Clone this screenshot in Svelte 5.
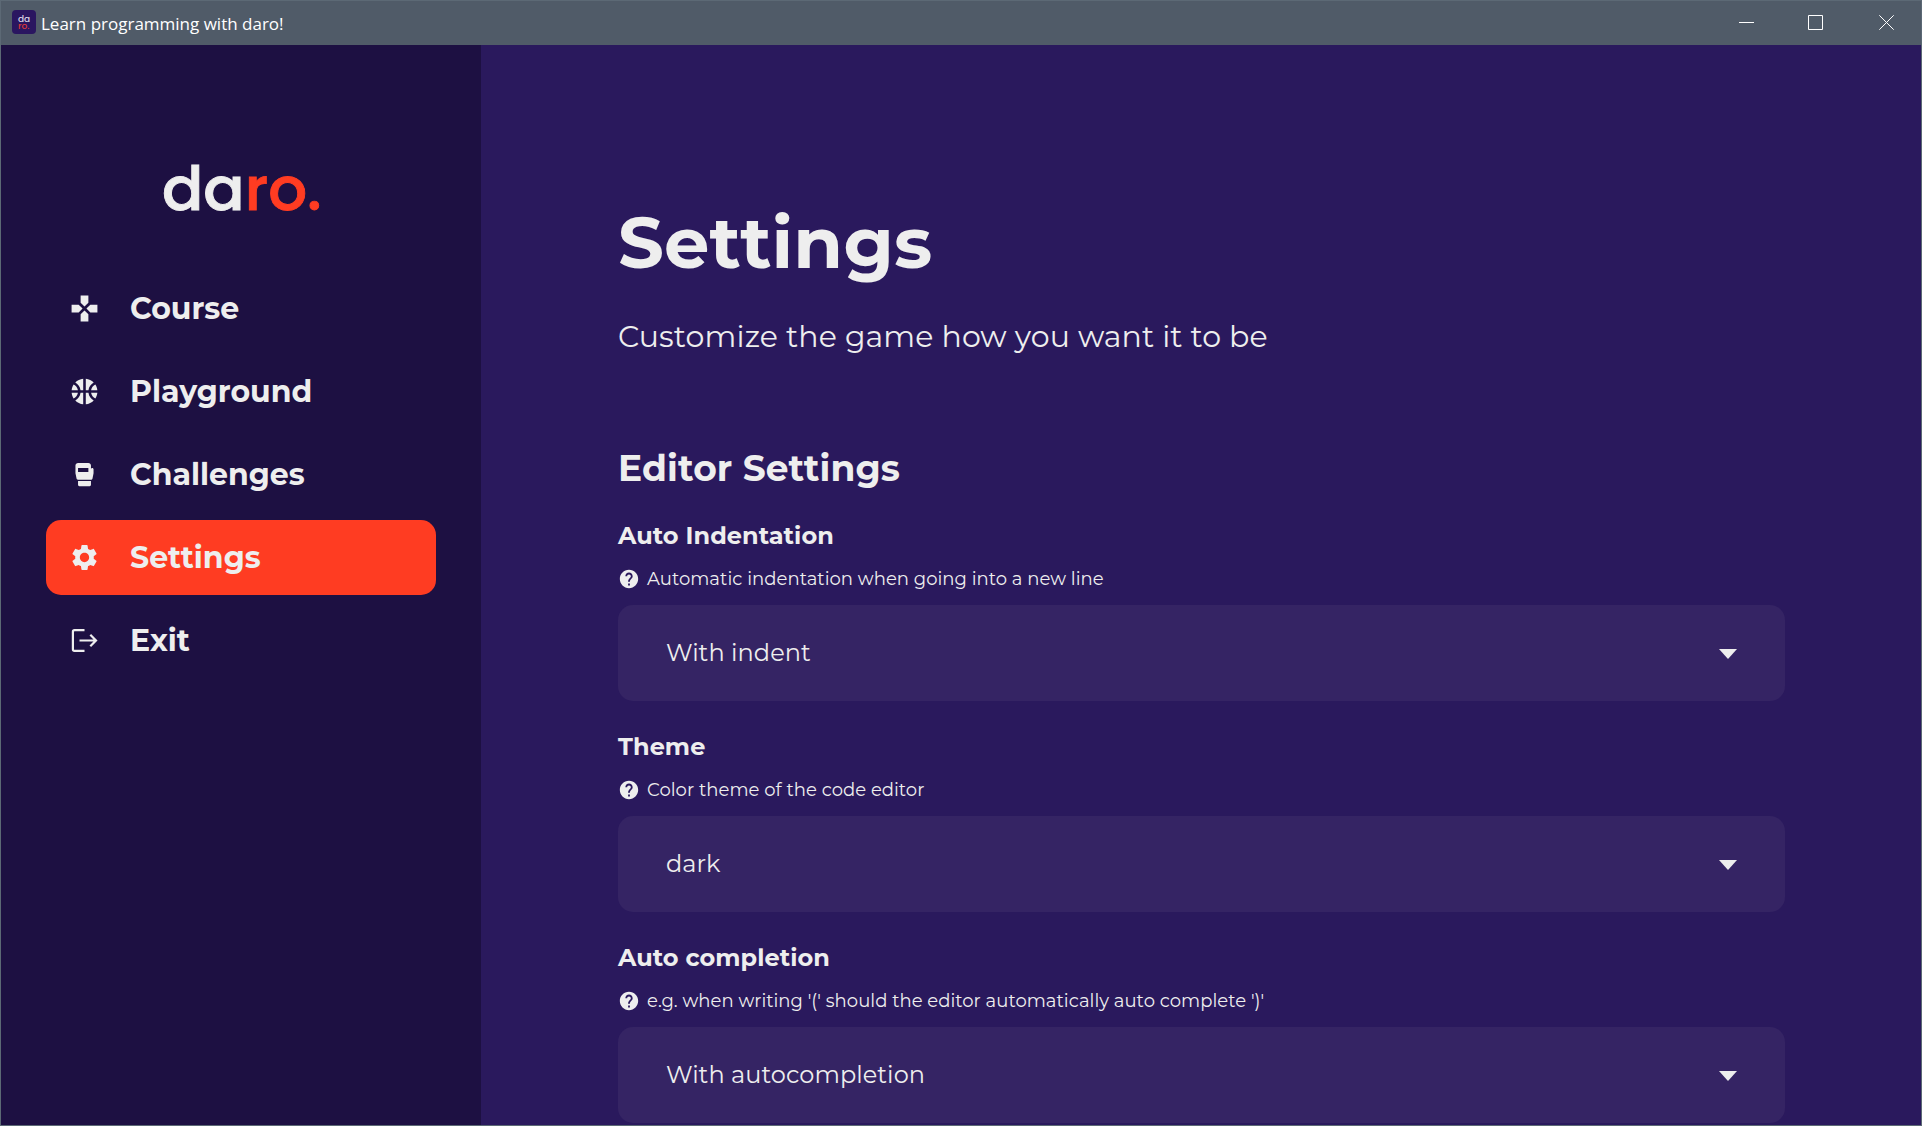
<script>
  const menu = [
    {
      label: 'Course',
      icon: 'M15 7.5V2H9v5.5l3 3 3-3zM7.5 9H2v6h5.5l3-3-3-3zM9 16.5V22h6v-5.5l-3-3-3 3zM16.5 9l-3 3 3 3H22V9h-5.5z'
    },
    {
      label: 'Playground',
      icon: 'M17.09 11h4.86c-.16-1.61-.71-3.11-1.54-4.4-1.73.83-2.99 2.45-3.32 4.4zM6.91 11c-.33-1.95-1.59-3.57-3.32-4.4-.83 1.29-1.38 2.79-1.54 4.4h4.86zM15.07 11c.32-2.59 1.88-4.79 4.06-6-1.6-1.63-3.74-2.71-6.13-2.95V11h2.07zM8.93 11H11V2.05C8.61 2.29 6.46 3.37 4.87 5c2.18 1.21 3.74 3.41 4.06 6zM15.07 13H13v8.95c2.39-.24 4.54-1.32 6.13-2.95-2.18-1.21-3.74-3.41-4.06-6zM3.59 17.4c1.72-.83 2.99-2.46 3.32-4.4H2.05c.16 1.61.71 3.11 1.54 4.4zM17.09 13c.33 1.95 1.59 3.57 3.32 4.4.83-1.29 1.38-2.79 1.54-4.4h-4.86zM8.93 13c-.32 2.59-1.88 4.79-4.06 6 1.6 1.63 3.74 2.71 6.13 2.95V13H8.93z'
    },
    {
      label: 'Challenges',
      icon: 'M7 20c0 .55.45 1 1 1h8c.55 0 1-.45 1-1v-3H7v3zM18 7c-.55 0-1 .45-1 1V5c0-1.1-.9-2-2-2H7c-1.1 0-2 .9-2 2v5.8c0 .13.01.26.04.39l.8 4c.09.47.5.8.98.8H17c.55 0 1.09-.44 1.2-.98l.77-3.83c.02-.12.03-.25.03-.38V8c0-.55-.45-1-1-1zm-3 3H7V7h8v3z'
    },
    {
      label: 'Settings',
      active: true,
      icon: 'M19.14 12.94c.04-.3.06-.61.06-.94 0-.32-.02-.64-.07-.94l2.03-1.58c.18-.14.23-.41.12-.61l-1.92-3.32c-.12-.22-.37-.29-.59-.22l-2.39.96c-.5-.38-1.03-.7-1.62-.94l-.36-2.54c-.04-.24-.24-.41-.48-.41h-3.84c-.24 0-.43.17-.47.41l-.36 2.54c-.59.24-1.13.57-1.62.94l-2.39-.96c-.22-.08-.47 0-.59.22L2.74 8.87c-.12.21-.08.47.12.61l2.03 1.58c-.05.3-.09.63-.09.94s.02.64.07.94l-2.03 1.58c-.18.14-.23.41-.12.61l1.92 3.32c.12.22.37.29.59.22l2.39-.96c.5.38 1.03.7 1.62.94l.36 2.54c.05.24.24.41.48.41h3.84c.24 0 .44-.17.47-.41l.36-2.54c.59-.24 1.13-.56 1.62-.94l2.39.96c.22.08.47 0 .59-.22l1.92-3.32c.12-.22.07-.47-.12-.61l-2.01-1.58zM12 15.6c-1.98 0-3.6-1.62-3.6-3.6s1.62-3.6 3.6-3.6 3.6 1.62 3.6 3.6-1.62 3.6-3.6 3.6z'
    },
    { label: 'Exit' }
  ];

  const settings = [
    { title: 'Auto Indentation', help: 'Automatic indentation when going into a new line', value: 'With indent' },
    { title: 'Theme', help: 'Color theme of the code editor', value: 'dark' },
    {
      title: 'Auto completion',
      help: "e.g. when writing '(' should the editor automatically auto complete ')'",
      value: 'With autocompletion'
    }
  ];
</script>

<div class="window">
  <header class="titlebar">
    <div class="app-icon"><span>da</span><span class="accent">ro.</span></div>
    <span class="caption">Learn programming with daro!</span>
    <div class="controls">
      <svg viewBox="0 0 15 15"><path d="M0 7.5h15" /></svg>
      <svg viewBox="0 0 15 15"><path d="M.5.5h14v14H.5z" /></svg>
      <svg viewBox="0 0 15 15"><path d="M.3.3l14.4 14.4M14.7.3L.3 14.7" /></svg>
    </div>
  </header>

  <div class="body">
    <aside>
      <div class="logo">da<span class="accent">ro.</span></div>
      <nav>
        {#each menu as item}
          <div class="item" class:active={item.active}>
            {#if item.icon}
              <svg class="icon" viewBox="0 0 24 24"><path d={item.icon} /></svg>
            {:else}
              <svg class="icon outline" viewBox="0 0 31 31">
                <path d="M15.5 5.1H5.5Q3.9 5.1 3.9 6.7V24.3Q3.9 25.9 5.5 25.9H15.5M10.5 15.5H27M21.3 9.8L27 15.5l-5.7 5.7" />
              </svg>
            {/if}
            <span>{item.label}</span>
          </div>
        {/each}
      </nav>
    </aside>

    <main>
      <h1>Settings</h1>
      <p class="lead">Customize the game how you want it to be</p>
      <h2>Editor Settings</h2>
      {#each settings as s}
        <section>
          <h3>{s.title}</h3>
          <div class="help">
            <svg viewBox="0 0 24 24">
              <path
                d="M12 2C6.48 2 2 6.48 2 12s4.48 10 10 10 10-4.48 10-10S17.52 2 12 2zm1 17h-2v-2h2v2zm2.07-7.75l-.9.92C13.45 12.9 13 13.5 13 15h-2v-.5c0-1.1.45-2.1 1.17-2.83l1.24-1.26c.37-.36.59-.86.59-1.41 0-1.1-.9-2-2-2s-2 .9-2 2H8c0-2.21 1.79-4 4-4s4 1.79 4 4c0 .88-.36 1.68-.93 2.25z"
              />
            </svg>
            <span>{s.help}</span>
          </div>
          <div class="select">
            <span>{s.value}</span>
            <svg viewBox="0 0 18 10"><path d="M0 0h18L9 10z" /></svg>
          </div>
        </section>
      {/each}
    </main>
  </div>
</div>

<style>
  :global(body) {
    overflow: hidden;
  }

  .window {
    box-sizing: border-box;
    width: 1922px;
    height: 1126px;
    display: flex;
    flex-direction: column;
    overflow: hidden;
    border: 1px solid #5c6975;
    background: #2a195d;
    color: #eeeeee;
    font-family: Montserrat, Poppins, Inter, sans-serif;
  }

  .titlebar {
    flex: none;
    height: 44px;
    box-sizing: border-box;
    display: flex;
    align-items: center;
    padding: 0 27px 0 11px;
    background: #505b68;
  }

  .app-icon {
    box-sizing: border-box;
    width: 24px;
    height: 24px;
    margin-top: -2px;
    padding: 6px 0 0 6px;
    display: flex;
    flex-direction: column;
    border-radius: 4px;
    background: #2a1660;
    font: 500 9px/7px Poppins, Montserrat, sans-serif;
    color: #d8d3e4;
  }

  .app-icon .accent {
    color: #d9363a;
  }

  .caption {
    margin: 2px 0 0 5px;
    font: 400 17px/24px "Segoe UI", "Open Sans", sans-serif;
    color: #ffffff;
  }

  .controls {
    display: flex;
    gap: 55px;
    margin: -1px 0 0 auto;
  }

  .controls svg {
    width: 15px;
    height: 15px;
    fill: none;
    stroke: #ffffff;
    stroke-width: 1;
  }

  .controls svg:nth-child(2) {
    margin: 0 1px 0 -1px;
  }

  .body {
    flex: 1;
    min-height: 0;
    display: flex;
  }

  aside {
    flex: none;
    width: 480px;
    box-sizing: border-box;
    padding: 104px 45px 0;
    background: #1d1042;
  }

  .logo {
    height: 80px;
    padding-left: 116px;
    font: 500 61px/80px Poppins, Montserrat, sans-serif;
    color: #eeeeee;
    -webkit-text-stroke: 0.9px currentColor;
  }

  .accent {
    color: #ff3c22;
  }

  nav {
    display: flex;
    flex-direction: column;
    gap: 8px;
    margin-top: 42px;
  }

  .item {
    height: 75px;
    display: flex;
    align-items: center;
    padding-left: 22.5px;
    border-radius: 15px;
    font-size: 30px;
    font-weight: 700;
    line-height: 37px;
  }

  .active {
    background: #ff3c22;
  }

  .icon {
    width: 31px;
    height: 31px;
    margin-right: 30.5px;
    fill: #eeeeee;
  }

  .outline {
    fill: none;
    stroke: #eeeeee;
    stroke-width: 2.2;
  }

  main {
    flex: 1;
    min-width: 0;
    padding: 153px 136px 0 137px;
  }

  h1,
  h2,
  h3,
  p {
    margin: 0;
    font-weight: 700;
  }

  h1 {
    font-size: 72px;
    line-height: 88px;
    letter-spacing: 0.1px;
  }

  .lead {
    margin-top: 33px;
    font-size: 30px;
    font-weight: 400;
    line-height: 36px;
    letter-spacing: 0.11px;
  }

  h2 {
    margin: 91px 0 31px;
    font-size: 36px;
    line-height: 44px;
    letter-spacing: 0.08px;
  }

  section {
    margin-bottom: 30px;
  }

  h3 {
    font-size: 24px;
    line-height: 30px;
    letter-spacing: 0.06px;
  }

  .help {
    display: flex;
    align-items: center;
    gap: 7.5px;
    margin: 17px 0 15px;
    font-size: 18px;
    line-height: 22px;
    letter-spacing: 0.04px;
  }

  .help svg {
    width: 22px;
    height: 22px;
    margin-left: -0.5px;
    fill: #eeeeee;
  }

  .select {
    box-sizing: border-box;
    height: 96px;
    display: flex;
    align-items: center;
    justify-content: space-between;
    padding: 0 48px;
    border-radius: 15px;
    background: #352464;
    font-size: 24px;
    line-height: 30px;
    letter-spacing: 0.06px;
  }

  section + section {
    margin-top: 31px;
  }

  .select svg {
    width: 18px;
    height: 10px;
    margin-top: 2px;
    fill: #eeeeee;
  }
</style>
